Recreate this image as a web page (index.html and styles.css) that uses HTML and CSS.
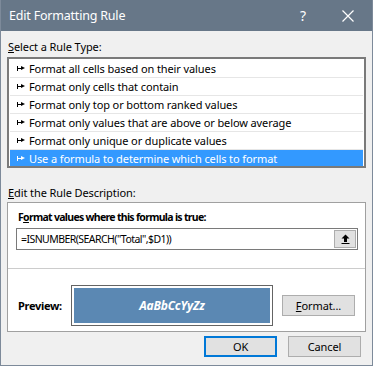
FILE: index.html
```html
<!DOCTYPE html>
<html lang="en">
<head>
    <meta charset="UTF-8">
    <title>Edit Formatting Rule</title>
    <link rel="stylesheet" href="styles.css">
</head>
<body>
    <div class="window">
        <div class="titlebar">
            <span class="title">Edit Formatting Rule</span>
            <span class="help">?</span>
            <svg class="close" width="12" height="12" viewBox="0 0 12 12">
                <path d="M0.5 0.5L11.5 11.5M11.5 0.5L0.5 11.5" stroke="#fff" stroke-width="1.2" fill="none"/>
            </svg>
        </div>

        <div class="content">
            <div class="section-label"><u>S</u>elect a Rule Type:</div>
            <div class="rule-list">
                <div class="rule"><span class="pin"></span>Format all cells based on their values</div>
                <div class="rule"><span class="pin"></span>Format only cells that contain</div>
                <div class="rule"><span class="pin"></span>Format only top or bottom ranked values</div>
                <div class="rule"><span class="pin"></span>Format only values that are above or below average</div>
                <div class="rule"><span class="pin"></span>Format only unique or duplicate values</div>
                <div class="rule selected"><span class="pin"></span>Use a formula to determine which cells to format</div>
            </div>

            <div class="section-label second"><u>E</u>dit the Rule Description:</div>
            <div class="group">
                <div class="group-top">
                    <div class="bold-label">F<u>o</u>rmat values where this formula is true:</div>
                    <div class="formula">
                        <span class="formula-text">=ISNUMBER(SEARCH("Total",$D1))</span>
                        <span class="collapse-btn">
                            <svg width="9" height="10" viewBox="0 0 9 10">
                                <path d="M4.5 0.5L8.5 4.5H6V8H3V4.5H0.5Z" fill="#000"/>
                                <rect x="0.5" y="9" width="8" height="1" fill="#000"/>
                            </svg>
                        </span>
                    </div>
                </div>
                <div class="preview-row">
                    <span class="bold-label">Preview:</span>
                    <div class="preview-box"><span>AaBbCcYyZz</span></div>
                    <button class="btn format-btn"><u>F</u>ormat...</button>
                </div>
            </div>

            <div class="actions">
                <button class="btn default">OK</button>
                <button class="btn">Cancel</button>
            </div>
        </div>
    </div>
</body>
</html>
```

FILE: styles.css
```css
* {
    margin: 0;
    padding: 0;
    box-sizing: border-box;
}

body {
    font-family: 'Noto Sans', 'Open Sans', sans-serif;
    font-size: 11px;
    letter-spacing: -0.1px;
    color: #000;
    background: #f0f0f0;
}

.window {
    width: 373px;
    height: 366px;
    background: #f0f0f0;
    border: 1px solid #7d8a9a;
    border-top: none;
}

.titlebar {
    height: 31px;
    background: #677788;
    color: #fff;
    display: flex;
    align-items: center;
    padding-left: 8px;
}

.title {
    font-size: 12.5px;
    letter-spacing: -0.2px;
    flex: 1;
}

.help {
    font-size: 14px;
    margin-right: 36px;
}

.close {
    margin-right: 18px;
}

.content {
    padding: 8px 6px 0 6px;
}

.section-label {
    height: 18px;
    line-height: 16px;
    padding-left: 1px;
}

.section-label.second {
    margin-top: 17px;
    height: 17px;
}

.rule-list {
    height: 111px;
    background: #fff;
    border: 2px solid #7a7a7a;
    padding: 1px 1px 0 1px;
}

.rule {
    height: 18px;
    line-height: 17px;
    border-bottom: 1px solid #e6e6e6;
    display: flex;
    align-items: center;
    padding-left: 7px;
    white-space: nowrap;
}

.rule.selected {
    height: 16px;
    border-bottom: none;
    background: #3399ff;
    color: #fff;
}

.pin {
    width: 8px;
    height: 5px;
    margin-right: 4px;
    position: relative;
    border-left: 1px solid currentColor;
}

.pin::before {
    content: '';
    position: absolute;
    left: 0;
    top: 2px;
    width: 4px;
    height: 1px;
    background: currentColor;
}

.pin::after {
    content: '';
    position: absolute;
    left: 3px;
    top: 0;
    border-left: 4px solid currentColor;
    border-top: 2.5px solid transparent;
    border-bottom: 2.5px solid transparent;
}

.group {
    height: 130px;
    background: #fff;
    border: 1px solid #a0a0a0;
}

.group-top {
    height: 66px;
    border-bottom: 1px solid #cccccc;
    padding: 7px 7px 0 10px;
}

.bold-label {
    font-weight: bold;
    font-size: 10.5px;
    letter-spacing: -0.7px;
}

.formula {
    margin-top: 4px;
    margin-left: -2px;
    height: 22px;
    border: 1px solid #7a7a7a;
    display: flex;
    align-items: center;
    justify-content: space-between;
    padding: 0 1px 0 4px;
}

.formula-text {
    font-size: 10.5px;
    letter-spacing: -0.55px;
}

.collapse-btn {
    width: 22px;
    height: 18px;
    background: #e1e1e1;
    border: 1px solid #adadad;
    display: flex;
    align-items: center;
    justify-content: center;
}

.preview-row {
    display: flex;
    align-items: center;
    padding: 16px 0 0 10px;
}

.preview-row .bold-label {
    width: 53px;
    font-size: 11px;
    letter-spacing: -0.3px;
}

.preview-box {
    width: 202px;
    height: 41px;
    border: 1px solid #646464;
    padding: 2px;
    background: #fff;
}

.preview-box span {
    display: flex;
    height: 100%;
    align-items: center;
    justify-content: center;
    background: #5b88b3;
    color: #fff;
    font-style: italic;
    font-weight: bold;
    font-size: 12px;
    letter-spacing: -0.2px;
}

.btn {
    font-family: inherit;
    font-size: 11px;
    letter-spacing: -0.1px;
    background: #e1e1e1;
    border: 1px solid #adadad;
    color: #000;
    height: 21px;
    width: 73px;
}

.format-btn {
    margin-left: 9px;
}

.actions {
    display: flex;
    justify-content: flex-end;
    gap: 11px;
    padding: 4px 5px 0 0;
}

.btn.default {
    border: 2px solid #0078d7;
}
```
